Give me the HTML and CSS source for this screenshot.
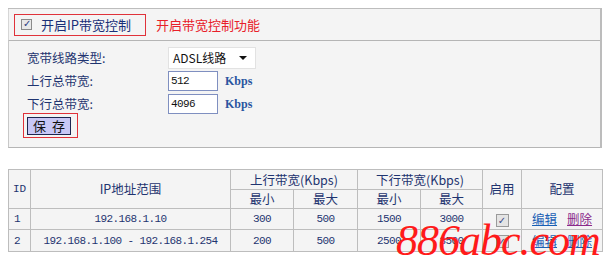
FILE: index.html
```html
<!DOCTYPE html>
<html lang="zh-CN">
<head>
    <meta charset="UTF-8">
    <title>IP带宽控制</title>
    <link rel="stylesheet" href="styles.css">
</head>
<body>

<div class="page">
    <div class="panel">
        <div class="panel-head">
            <label class="mark enable-box">
                <input type="checkbox" class="chk" checked>
                <span>开启IP带宽控制</span>
            </label>
            <span class="hint">开启带宽控制功能</span>
        </div>

        <div class="panel-body">
            <div class="row">
                <span class="lbl">宽带线路类型:</span>
                <div class="select">
                    <span>ADSL线路</span>
                    <span class="arrow"></span>
                </div>
            </div>
            <div class="row">
                <span class="lbl">上行总带宽:</span>
                <input type="text" class="box" value="512">
                <span class="unit">Kbps</span>
            </div>
            <div class="row">
                <span class="lbl">下行总带宽:</span>
                <input type="text" class="box" value="4096">
                <span class="unit">Kbps</span>
            </div>
            <div class="mark save-box">
                <button type="button" class="save">保&nbsp;存</button>
            </div>
        </div>
    </div>

    <table class="rules">
        <colgroup>
            <col style="width: 22px">
            <col style="width: 200px">
            <col style="width: 63px">
            <col style="width: 64px">
            <col style="width: 63px">
            <col style="width: 62px">
            <col style="width: 39px">
            <col style="width: 81px">
        </colgroup>
        <tr class="h1">
            <th rowspan="2" class="c-id">ID</th>
            <th rowspan="2">IP地址范围</th>
            <th colspan="2">上行带宽(Kbps)</th>
            <th colspan="2">下行带宽(Kbps)</th>
            <th rowspan="2">启用</th>
            <th rowspan="2">配置</th>
        </tr>
        <tr class="h2">
            <th>最小</th>
            <th>最大</th>
            <th>最小</th>
            <th>最大</th>
        </tr>
        <tr class="r1">
            <td class="num left">1</td>
            <td class="num">192.168.1.10</td>
            <td class="num">300</td>
            <td class="num">500</td>
            <td class="num">1500</td>
            <td class="num">3000</td>
            <td><span class="tick">&#10003;</span></td>
            <td class="ops"><a href="#">编辑</a><a href="#" class="seen">删除</a></td>
        </tr>
        <tr class="r2">
            <td class="num left">2</td>
            <td class="num">192.168.1.100 - 192.168.1.254</td>
            <td class="num">200</td>
            <td class="num">500</td>
            <td class="num">2500</td>
            <td class="num">3500</td>
            <td><span class="tick">&#10003;</span></td>
            <td class="ops"><a href="#">编辑</a><a href="#">删除</a></td>
        </tr>
    </table>

    <div class="watermark">886abc.com</div>
</div>

</body>
</html>
```

FILE: styles.css
```css
body {
    margin: 0;
    background: #fff;
    font-family: 'Noto Sans CJK SC', sans-serif;
    font-size: 12px;
    line-height: 14px;
    color: #1f3470;
    overflow: hidden;
}
.page {
    position: relative;
    width: 603px;
    height: 263px;
    padding: 8px 0 0 8px;
    box-sizing: border-box;
}
.panel {
    width: 594px;
    background: #f4f4f4;
    border-top: 1px solid #bdbdbd;
    border-right: 2px solid #bcbcbc;
    box-sizing: border-box;
}
.panel-head {
    height: 32px;
    display: flex;
    align-items: center;
    padding-left: 5px;
    box-sizing: border-box;
    border-bottom: 1px solid #b5b5b5;
    border-left: 1px solid #d6d6d6;
}
.mark {
    border: 1px solid #e0323a;
}
.enable-box {
    display: flex;
    align-items: center;
    width: 132px;
    height: 22px;
    box-sizing: border-box;
    padding-left: 6px;
    font-size: 13px;
    color: #1a2f78;
}
.chk {
    appearance: none;
    width: 11px;
    height: 11px;
    margin: 0 9px 0 0;
    border: 1px solid #8a8a8a;
    background: #e8e8e8;
    position: relative;
}
.chk:checked::after {
    content: '\2713';
    position: absolute;
    left: 1px;
    top: -2px;
    font-size: 10px;
    color: #2a3a80;
    font-family: 'DejaVu Sans', sans-serif;
}
.hint {
    margin-left: 10px;
    color: #e8202a;
    font-size: 13px;
}
.panel-body {
    height: 107px;
    padding: 5px 0 0 18px;
    box-sizing: border-box;
    border-left: 1px solid #c8c8c8;
    border-bottom: 1px solid #b5b5b5;
}
.row {
    display: flex;
    align-items: center;
    height: 23px;
}
.lbl {
    width: 141px;
    font-size: 12.5px;
}
.select {
    width: 88px;
    height: 22px;
    background: #fff;
    border: 1px solid #e2e2e2;
    box-sizing: border-box;
    display: flex;
    align-items: center;
    justify-content: space-between;
    padding: 0 8px 0 4px;
    font-size: 12px;
    color: #111;
}
.arrow {
    width: 0;
    height: 0;
    border-left: 4px solid transparent;
    border-right: 4px solid transparent;
    border-top: 4px solid #111;
}
.box {
    width: 50px;
    height: 20px;
    margin: 0;
    padding: 0 2px;
    box-sizing: border-box;
    border: 1px solid #7f8fc0;
    background: #fff;
    font-family: 'Liberation Mono', monospace;
    font-size: 11px;
    letter-spacing: -0.6px;
    color: #111;
}
.unit {
    margin-left: 7px;
    font-family: 'Liberation Serif', serif;
    font-weight: bold;
    font-size: 12px;
    color: #2a55a0;
}
.save-box {
    width: 55px;
    height: 25px;
    margin: -2px 0 0 -4px;
    box-sizing: border-box;
    padding: 3px 0 0 3px;
}
.save {
    width: 44px;
    height: 18px;
    padding: 0;
    border: 1px solid #1c2650;
    background: #c8c8f6;
    font-family: 'Noto Sans CJK SC', sans-serif;
    font-size: 13px;
    line-height: 14px;
    word-spacing: 3px;
    color: #111;
}
.rules {
    margin-top: 21px;
    width: 594px;
    border-collapse: collapse;
    background: #f4f4f4;
    table-layout: fixed;
}
.rules th, .rules td {
    border: 1px solid #bdbdbd;
    padding: 0;
    text-align: center;
    font-weight: normal;
    font-size: 12.5px;
    line-height: 14px;
    white-space: nowrap;
    color: #1f3470;
}
.rules th.c-id {
    font-family: 'Liberation Mono', monospace;
    font-size: 11px;
}
.h1 { height: 20px; }
.h2 { height: 19px; }
.r1 { height: 21px; }
.r2 { height: 22px; }
.rules td.num {
    font-family: 'Liberation Mono', monospace;
    font-size: 11px;
    letter-spacing: -0.6px;
}
.rules td.left {
    text-align: left;
    padding-left: 5px;
}
.tick {
    display: inline-block;
    width: 11px;
    height: 11px;
    border: 1px solid #9a9a9a;
    background: #e4e4e4;
    font-family: 'DejaVu Sans', sans-serif;
    font-size: 10px;
    line-height: 11px;
    color: #3a4a88;
    vertical-align: middle;
}
.ops a {
    margin: 0 5px;
    color: #1a5fb4;
    font-size: 12.5px;
}
.ops a.seen {
    color: #8a2a8a;
}
.watermark {
    position: absolute;
    left: 396px;
    top: 219px;
    font-family: 'Liberation Serif', serif;
    font-style: italic;
    font-size: 44px;
    line-height: 44px;
    color: #ff1a1a;
    letter-spacing: -1px;
}
```
